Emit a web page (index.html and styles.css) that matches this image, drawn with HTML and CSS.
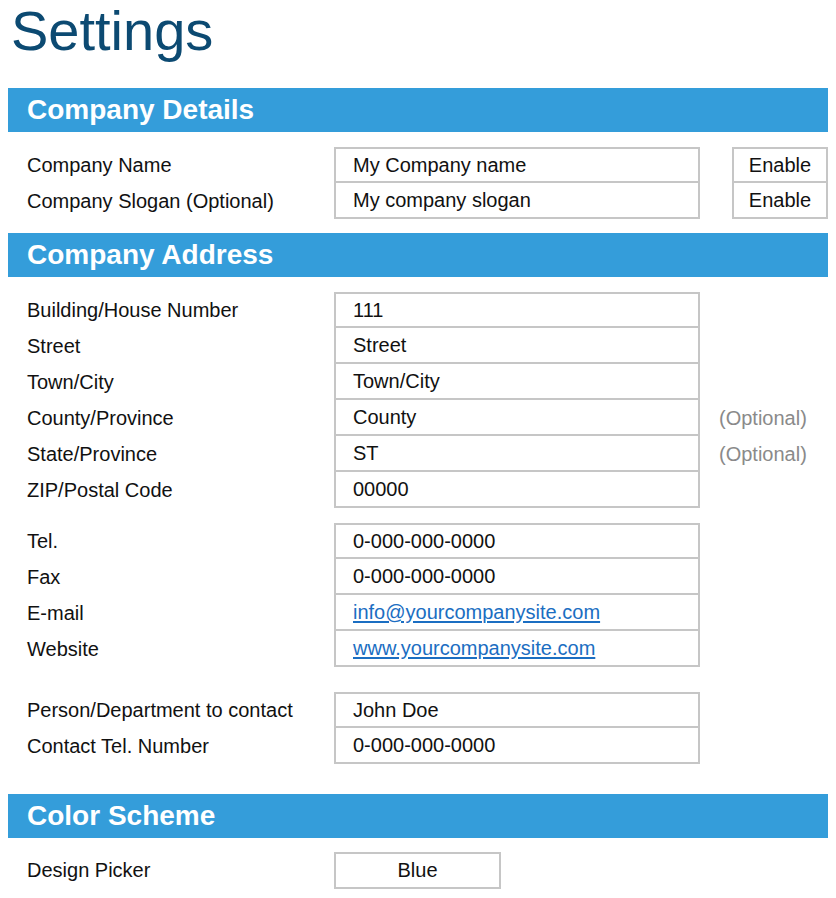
FILE: index.html
```html
<!DOCTYPE html>
<html lang="en">
<head>
<meta charset="utf-8">
<title>Settings</title>
<link rel="stylesheet" href="styles.css">
</head>
<body>
<h1 class="page-title">Settings</h1>

<section class="section">
  <h2 class="section-head">Company Details</h2>
  <div class="group">
    <div class="label">Company Name</div>
    <div class="cell first">My Company name</div>
    <div class="extra"><span class="toggle first">Enable</span></div>
    <div class="label">Company Slogan (Optional)</div>
    <div class="cell">My company slogan</div>
    <div class="extra"><span class="toggle">Enable</span></div>
  </div>
</section>

<section class="section">
  <h2 class="section-head">Company Address</h2>
  <div class="group">
    <div class="label">Building/House Number</div>
    <div class="cell first">111</div>
    <div class="extra"></div>
    <div class="label">Street</div>
    <div class="cell">Street</div>
    <div class="extra"></div>
    <div class="label">Town/City</div>
    <div class="cell">Town/City</div>
    <div class="extra"></div>
    <div class="label">County/Province</div>
    <div class="cell">County</div>
    <div class="extra"><span class="hint">(Optional)</span></div>
    <div class="label">State/Province</div>
    <div class="cell">ST</div>
    <div class="extra"><span class="hint">(Optional)</span></div>
    <div class="label">ZIP/Postal Code</div>
    <div class="cell">00000</div>
    <div class="extra"></div>
  </div>

  <div class="group">
    <div class="label">Tel.</div>
    <div class="cell first">0-000-000-0000</div>
    <div class="extra"></div>
    <div class="label">Fax</div>
    <div class="cell">0-000-000-0000</div>
    <div class="extra"></div>
    <div class="label">E-mail</div>
    <div class="cell"><a class="link" href="#">info@yourcompanysite.com</a></div>
    <div class="extra"></div>
    <div class="label">Website</div>
    <div class="cell"><a class="link" href="#">www.yourcompanysite.com</a></div>
    <div class="extra"></div>
  </div>

  <div class="group group-wide">
    <div class="label">Person/Department to contact</div>
    <div class="cell first">John Doe</div>
    <div class="extra"></div>
    <div class="label">Contact Tel. Number</div>
    <div class="cell">0-000-000-0000</div>
    <div class="extra"></div>
  </div>
</section>

<section class="section section-wide">
  <h2 class="section-head">Color Scheme</h2>
  <div class="picker-row">
    <div class="label">Design Picker</div>
    <div class="picker">Blue</div>
  </div>
</section>
</body>
</html>
```

FILE: styles.css
```css
html, body {
  background: #ffffff;
}

body {
  margin: 0 8px;
  font-family: "Liberation Sans", Arial, sans-serif;
  color: #111111;
}

.page-title {
  margin: 0 0 29px 3px;
  padding-top: 3px;
  font-size: 56px;
  line-height: 1;
  font-weight: normal;
  color: #0c4a72;
}

.section + .section {
  margin-top: 14px;
}

.section-wide {
  margin-top: 30px !important;
}

.section-head {
  margin: 0;
  height: 44px;
  display: flex;
  align-items: center;
  padding-left: 19px;
  background: #349dda;
  color: #ffffff;
  font-size: 28px;
  font-weight: bold;
}

/* rows of label | bordered value | extra */
.group {
  display: grid;
  grid-template-columns: 307px 366px 1fr;
  margin: 15px 0 0 19px;
  font-size: 20px;
}

.group-wide {
  margin-top: 25px;
}

.label {
  display: flex;
  align-items: center;
  height: 36px;
}

.cell {
  box-sizing: border-box;
  height: 36px;
  display: flex;
  align-items: center;
  padding-left: 17px;
  border: 2px solid #c6c6c6;
  border-top: 0;
}

.cell.first {
  border-top: 2px solid #c6c6c6;
}

.extra {
  display: flex;
  align-items: center;
  height: 36px;
}

.toggle {
  box-sizing: border-box;
  margin-left: 32px;
  width: 96px;
  height: 36px;
  display: flex;
  align-items: center;
  justify-content: center;
  border: 2px solid #c6c6c6;
  border-top: 0;
}

.toggle.first {
  border-top: 2px solid #c6c6c6;
}

.hint {
  margin-left: 19px;
  color: #8a8a8a;
}

.link {
  color: #1b6ec2;
  text-decoration: underline;
  text-underline-offset: 2px;
}

.picker-row {
  display: grid;
  grid-template-columns: 307px 167px;
  margin: 14px 0 0 19px;
  font-size: 20px;
}

.picker-row .label {
  height: 37px;
}

.picker {
  box-sizing: border-box;
  height: 37px;
  display: flex;
  align-items: center;
  justify-content: center;
  border: 2px solid #c6c6c6;
}
```
